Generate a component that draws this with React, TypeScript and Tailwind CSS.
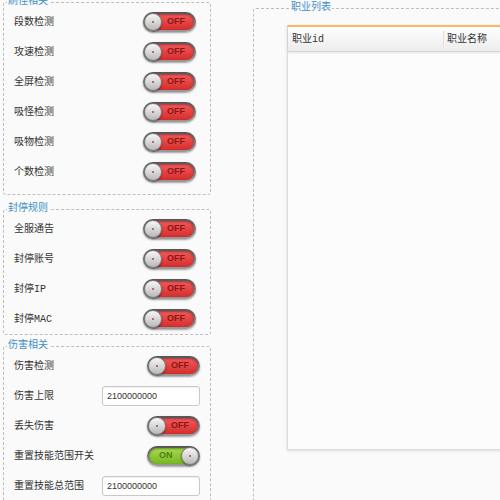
import React from "react";

const font = { fontFamily: '"Liberation Mono", "Noto Sans CJK SC", sans-serif' };

function Toggle({ on = false }: { on?: boolean }) {
  return (
    <div className="relative w-[53px] h-[20px] rounded-full bg-gradient-to-b from-[#555] to-[#9c9c9c] p-[2px] shadow-[0_1px_2px_rgba(0,0,0,0.35)] shrink-0">
      {on ? (
        <div className="h-full rounded-full bg-gradient-to-b from-[#a6dc4a] to-[#78b521] shadow-[inset_0_1px_2px_rgba(0,0,0,0.35)] flex items-center pl-[10px] text-[9px] font-bold text-[#4d7d12] font-['Liberation_Sans',sans-serif]">
          ON
        </div>
      ) : (
        <div className="h-full rounded-full bg-gradient-to-b from-[#f25a5a] to-[#d42c2c] shadow-[inset_0_1px_2px_rgba(0,0,0,0.35)] flex items-center justify-end pr-[9px] text-[9px] font-bold text-[#8c1616] font-['Liberation_Sans',sans-serif]">
          OFF
        </div>
      )}
      <div
        className={`absolute top-[1px] size-[18px] rounded-full bg-gradient-to-b from-[#f7f7f7] to-[#b9b9b9] border border-[#7a7a7a] shadow-[0_1px_2px_rgba(0,0,0,0.45)] flex items-center justify-center ${on ? "right-[1px]" : "left-[1px]"}`}
      >
        <span className="size-[2px] rounded-full bg-[#a04848]" />
      </div>
    </div>
  );
}

function NumInput({ value }: { value: string }) {
  return (
    <input
      readOnly
      value={value}
      className="w-[98px] h-[20px] border border-[#c8c8c8] rounded-[3px] bg-white px-[4px] text-[9px] text-[#333] shadow-[inset_0_1px_1px_rgba(0,0,0,0.06)] outline-none font-['Liberation_Sans',sans-serif]"
    />
  );
}

function Row({ label, children, right }: { label: string; children: React.ReactNode; right: string }) {
  return (
    <div className={`h-[30px] flex items-center justify-between pl-[10px] ${right}`}>
      <span className="text-[10px] text-[#333]" style={font}>
        {label}
      </span>
      {children}
    </div>
  );
}

function Group({ title, className, children }: { title: string; className?: string; children: React.ReactNode }) {
  return (
    <fieldset className={`border border-dashed border-[#bdbdbd] rounded-[3px] ${className ?? ""}`}>
      <legend className="ml-[3px] px-[1px] text-[10px] leading-[10px] text-[#3f8fc6]" style={font}>
        {title}
      </legend>
      {children}
    </fieldset>
  );
}

export default function App() {
  const killChecks = ["段数检测", "攻速检测", "全屏检测", "吸怪检测", "吸物检测", "个数检测"];
  const banRules = ["全服通告", "封停账号", "封停IP", "封停MAC"];

  return (
    <div className="w-[500px] h-[500px] overflow-hidden bg-[#fafafa] flex">
      <div className="ml-[3px] w-[208px] shrink-0 flex flex-col">
        <Group title="刷怪相关" className="-mt-[3px] pb-[7px]">
          {killChecks.map((l) => (
            <Row key={l} label={l} right="pr-[14px]">
              <Toggle />
            </Row>
          ))}
        </Group>

        <Group title="封停规则" className="mt-[9px]">
          {banRules.map((l) => (
            <Row key={l} label={l} right="pr-[14px]">
              <Toggle />
            </Row>
          ))}
        </Group>

        <Group title="伤害相关" className="mt-[6px] pb-[10px]">
          <Row label="伤害检测" right="pr-[10px]">
            <Toggle />
          </Row>
          <Row label="伤害上限" right="pr-[10px]">
            <NumInput value="2100000000" />
          </Row>
          <Row label="丢失伤害" right="pr-[10px]">
            <Toggle />
          </Row>
          <Row label="重置技能范围开关" right="pr-[10px]">
            <Toggle on />
          </Row>
          <Row label="重置技能总范围" right="pr-[10px]">
            <NumInput value="2100000000" />
          </Row>
        </Group>
      </div>

      <Group title="职业列表" className="ml-[42px] mt-[3px] w-[290px] h-[540px] shrink-0 pl-[33px] pt-[12px]">
        <div className="w-[240px] h-[425px] bg-[#fcfcfc] border border-[#dcdcdc] border-t-2 border-t-[#f7bd5e] shadow-[0_1px_3px_rgba(0,0,0,0.12)]">
          <div className="h-[25px] flex items-center bg-gradient-to-b from-[#ffffff] to-[#ececec] border-b border-[#d6d6d6] shadow-[0_1px_2px_rgba(0,0,0,0.1)] text-[10px] text-[#333]" style={font}>
            <div className="w-[155px] pl-[4px]">职业id</div>
            <div className="h-[17px] w-[2px] border-l border-[#e0e0e0] bg-[#f6f6f6]" />
            <div className="pl-[2px]">职业名称</div>
          </div>
        </div>
      </Group>
    </div>
  );
}
